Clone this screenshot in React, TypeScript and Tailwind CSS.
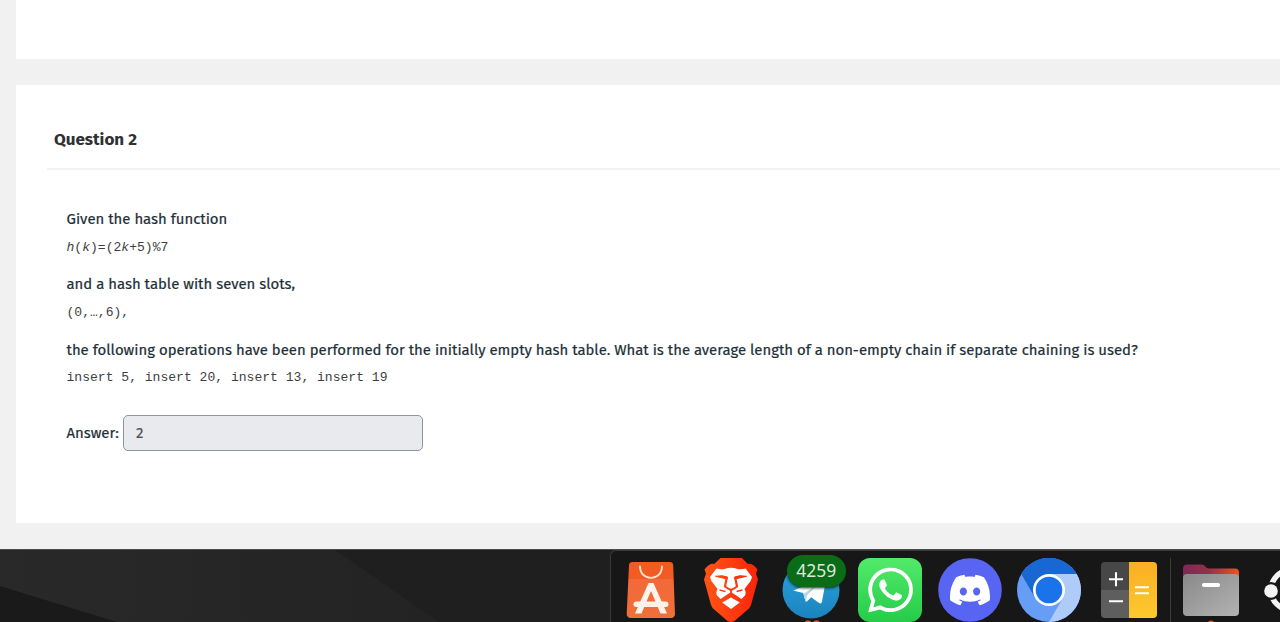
import React from "react";
import { SiDiscord, SiWhatsapp } from "react-icons/si";

const sans = "font-['Fira_Sans','Noto_Sans',sans-serif]";
const mono = "font-['Liberation_Mono',monospace] text-[13.05px] text-[#3c3f42]";

function Slot({ children }: { children?: React.ReactNode }) {
  return <div className="relative flex h-16 w-[79.6px] shrink-0 justify-center">{children}</div>;
}

function Icon({ children }: { children: React.ReactNode }) {
  return (
    <svg viewBox="0 0 64 64" className="size-16 shrink-0 overflow-visible">
      {children}
    </svg>
  );
}

function Store() {
  return (
    <Icon>
      <defs>
        <linearGradient id="store" x1="0" y1="0" x2="0" y2="1">
          <stop offset="0" stopColor="#f25a20" />
          <stop offset="0.3" stopColor="#f15c25" />
          <stop offset="0.31" stopColor="#f4683a" />
          <stop offset="1" stopColor="#ee7038" />
        </linearGradient>
      </defs>
      <path d="M13.5 4h37.2a3.5 3.5 0 0 1 3.5 3.2L56 56a3.800 3.800 0 0 1-3.800 4H11.500a3.800 3.800 0 0 1-3.800-4L10 7.300A3.500 3.500 0 0 1 13.500 4z" fill="url(#store)" />
      <path d="M21 8.500c0 6.800 4.500 11.300 11 11.300S43 15.300 43 8.500" fill="none" stroke="#ffe4d6" strokeWidth="1.800" strokeLinecap="round" />
      <path d="M29.500 25h5L48 55.500h-6.500L32 33l-9.500 22.500H16z" fill="#fff4ec" />
      <rect x="14.500" y="43.500" width="35" height="5.500" rx="2.700" fill="#fff1e7" />
    </Icon>
  );
}

function Brave() {
  return (
    <Icon>
      <defs>
        <linearGradient id="brave" x1="0" y1="0" x2="64" y2="0" gradientUnits="userSpaceOnUse">
          <stop offset="0" stopColor="#ff5a18" />
          <stop offset="1" stopColor="#fb1f08" />
        </linearGradient>
      </defs>
      <path d="M21.500 0h21.500l5.800 6q5-1 9.700 5.500l-1.500 4 2 6-7 25.500q-1 3-3.500 4.800L35.500 63q-3.500 2-7 0L15.500 51.800q-2.500-1.800-3.500-4.800L5 21.500l2-6-1.500-4Q10.200 5 15.200 6z" fill="url(#brave)" />
      <path d="M17.500 10.500q4 1.300 8 .5 3.500-1.200 6.500-1.200t6.500 1.200q4 .8 8-.5l6.500 8.500q-.5 4-4.500 8l-3 4q2 3.500.5 6.500L42.500 41 32 34l-10.500 7-3.500-3.500q-1.500-3 .5-6.500l-3-4q-4-4-4.500-8z" fill="#fff" />
      <path d="M16.500 18.300q7-1.500 12 .7l-.3 2q-6-1.300-11.700-2.700zM47.500 18.300q-7-1.500-12 .7l.3 2q6-1.300 11.700-2.700z" fill="url(#brave)" stroke="url(#brave)" strokeWidth="1" />
      <path d="M27.700 20l-1.700 8.500q3 2.300 6 3.500 3-1.200 6-3.500L36.300 20" fill="none" stroke="url(#brave)" strokeWidth="2.200" />
      <path d="M32 31v6M20.500 32l6 1.500M43.500 32l-6 1.500" fill="none" stroke="url(#brave)" strokeWidth="1.800" />
      <path d="m32 39.500 8.800 5L32 51l-8.800-6.500z" fill="#fff" />
    </Icon>
  );
}

function Telegram() {
  return (
    <Icon>
      <defs>
        <linearGradient id="tg" x1="0" y1="0" x2="0" y2="1">
          <stop offset="0" stopColor="#2aa5df" />
          <stop offset="1" stopColor="#1b83bd" />
        </linearGradient>
      </defs>
      <circle cx="32" cy="32" r="28.500" fill="url(#tg)" />
      <path d="M14.500 32.500 43 20.500q4.500-2 3.800 2.500l-3.900 21q-.6 2.500-3.200.8l-7.500-5.600-4 4q-1.600 1.300-2-1l-2-7.200-9.200-2.300q-3-.700-.5-.200z" fill="#fff" />
      <path d="m24.500 36 14.500-10-11 11.500-1.500 6z" fill="#b9d5e6" />
      <circle cx="29" cy="65.700" r="3.500" fill="#e34d2b" />
      <circle cx="37.500" cy="65.700" r="3.500" fill="#e34d2b" />
    </Icon>
  );
}

function WhatsApp() {
  return (
    <Icon>
      <defs>
        <linearGradient id="wa" x1="0" y1="0" x2="0" y2="1">
          <stop offset="0" stopColor="#53ea6b" />
          <stop offset="1" stopColor="#25cc49" />
        </linearGradient>
      </defs>
      <rect width="64" height="64" rx="12" fill="url(#wa)" />
      <SiWhatsapp x="10" y="9.500" size={45} fill="#fff" />
    </Icon>
  );
}

function Discord() {
  return (
    <Icon>
      <circle cx="32" cy="32" r="31.800" fill="#5865f2" />
      <SiDiscord x="12" y="12" size={40} fill="#fff" />
    </Icon>
  );
}

function Chromium() {
  return (
    <Icon>
      <circle cx="32" cy="32" r="32" fill="#669df6" />
      <path d="M4.300 16A32 32 0 0 1 59.700 16H32L18.100 40z" fill="#1967d2" />
      <path d="M32 16h27.700A32 32 0 0 1 32 64l13.900-24z" fill="#aecbfa" />
      <circle cx="32" cy="32" r="16" fill="#fff" />
      <circle cx="32" cy="32" r="13.300" fill="#1a73e8" />
    </Icon>
  );
}

function Calculator() {
  return (
    <Icon>
      <defs>
        <linearGradient id="calc" x1="0" y1="0" x2="0" y2="1">
          <stop offset="0" stopColor="#f9af22" />
          <stop offset="1" stopColor="#fdc92f" />
        </linearGradient>
      </defs>
      <path d="M8 4h24v28H4V8a4 4 0 0 1 4-4z" fill="#474747" />
      <path d="M4 32h28v28H8a4 4 0 0 1-4-4z" fill="#5e5e5e" />
      <path d="M32 4h24a4 4 0 0 1 4 4v48a4 4 0 0 1-4 4H32z" fill="url(#calc)" />
      <path d="M12 21.300h14M19 14.300v14M12 43.300h14M38 29.300h14M38 35.300h14" stroke="#fff" strokeWidth="2.100" />
    </Icon>
  );
}

function Folder() {
  return (
    <Icon>
      <defs>
        <linearGradient id="tab" x1="0" y1="0" x2="1" y2="0">
          <stop offset="0" stopColor="#7c2956" />
          <stop offset="0.45" stopColor="#93304b" />
          <stop offset="1" stopColor="#ee5121" />
        </linearGradient>
        <linearGradient id="front" x1="0" y1="0" x2="1" y2="1">
          <stop offset="0" stopColor="#898989" />
          <stop offset="1" stopColor="#b3b3b3" />
        </linearGradient>
      </defs>
      <path d="M8 6.500h14.500q2.500 0 4 2.200 1.300 1.800 3.500 1.800H56a4 4 0 0 1 4 4V30H4V10.500a4 4 0 0 1 4-4z" fill="url(#tab)" />
      <rect x="4" y="16" width="56" height="42" rx="4" fill="url(#front)" />
      <rect x="23" y="25" width="18" height="4" rx="1.800" fill="#fff" />
      <circle cx="32" cy="66" r="3.500" fill="#e95420" />
    </Icon>
  );
}

function Ubuntu() {
  return (
    <Icon>
      <circle cx="33" cy="32" r="20" fill="none" stroke="#f4f4f4" strokeWidth="5.500" />
      <circle cx="13" cy="33" r="9" fill="#171717" />
      <circle cx="13" cy="33" r="6.800" fill="#f4f4f4" />
    </Icon>
  );
}

function Wallpaper() {
  return (
    <svg viewBox="0 0 610 73" className="h-[73px] w-[610px] shrink-0">
      <defs>
        <linearGradient id="wall" x1="0" y1="0" x2="1" y2="0">
          <stop offset="0" stopColor="#292929" />
          <stop offset="1" stopColor="#232323" />
        </linearGradient>
      </defs>
      <path d="M0 0H610V73H0z" fill="#1f1f1f" />
      <path d="M0 0H335L440 73H0z" fill="url(#wall)" />
      <path d="M0 36 120 73H0z" fill="#1a1a1a" />
    </svg>
  );
}

export default function App() {
  return (
    <div className={`flex h-[622px] w-[1280px] flex-col overflow-hidden bg-[#f1f1f1] ${sans}`}>
      <div className="ml-4 h-[59px] shrink-0 bg-white" />
      <main className="mt-[26px] ml-4 flex h-[438px] shrink-0 flex-col bg-white">
        <h2 className="ml-[31px] h-[85px] border-b-2 border-[#f3f3f3] pt-[43px] pl-[7px] text-[17px] leading-6 font-bold text-[#303134]">
          Question 2
        </h2>
        <div className="mt-[35px] ml-[50.500px] flex flex-col text-[14.92px] whitespace-nowrap text-[#1d2f37] [-webkit-text-stroke:0.2px]">
          <p className="h-7 leading-7">Given the hash function</p>
          <p className={`h-[37px] leading-[30px] [-webkit-text-stroke:0px] ${mono}`}>
            <i>h</i>(<i>k</i>)=(2<i>k</i>+5)%7
          </p>
          <p className="h-7 leading-7">and a hash table with seven slots,</p>
          <p className={`h-[38px] leading-[30px] [-webkit-text-stroke:0px] ${mono}`}>(0,…,6),</p>
          <p className="h-[27px] leading-7">
            the following operations have been performed for the initially empty hash table. What is the average length of a non-empty chain if separate chaining is used?
          </p>
          <p className={`h-[52px] leading-[30px] [-webkit-text-stroke:0px] ${mono}`}>insert 5, insert 20, insert 13, insert 19</p>
          <label className="flex h-9 items-center">
            <span className="w-[56.500px] pt-px">Answer:</span>
            <span className="flex h-9 w-[300px] items-center rounded-[5px] border border-[#8f959e] bg-[#e9eaee] pt-px pl-3 text-[#495057]">2</span>
          </label>
        </div>
      </main>
      <footer className="mt-[26px] flex h-[73px] shrink-0 border-t border-[#4b4b4b] bg-[#1f1f1f]">
        <Wallpaper />
        <nav className="flex h-[73px] w-[670px] shrink-0 overflow-hidden rounded-tl-md border-t border-l border-[#383838] bg-[#171717] pt-[7px] pl-[0.7px]">
          <Slot><Store /></Slot>
          <Slot><Brave /></Slot>
          <Slot>
            <Telegram />
            <span className="absolute -top-[3.500px] left-[16px] flex h-8 w-[59px] items-center justify-center rounded-full bg-[#0b6c17] pb-px font-['Noto_Sans',sans-serif] text-[17.5px] text-[#dce9dc] shadow-[0_1px_3px_#0a2a10]">4259</span>
          </Slot>
          <Slot><WhatsApp /></Slot>
          <Slot><Discord /></Slot>
          <Slot><Chromium /></Slot>
          <Slot><Calculator /></Slot>
          <div className="ml-px h-16 w-px shrink-0 bg-[#3c3c3c]" />
          <Slot><Folder /></Slot>
          <Slot><Ubuntu /></Slot>
        </nav>
      </footer>
    </div>
  );
}
